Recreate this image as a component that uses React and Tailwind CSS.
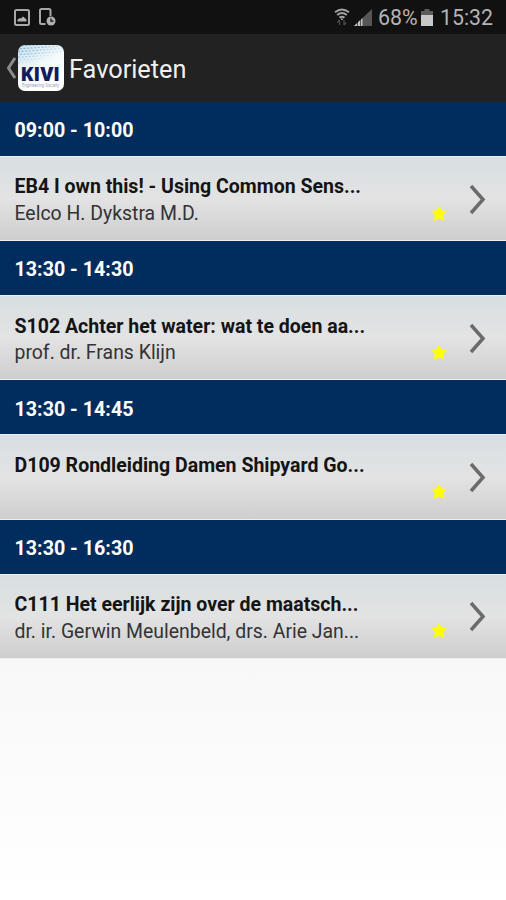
const rows = [
  { time: "09:00 - 10:00", title: "EB4 I own this! - Using Common Sens...", sub: "Eelco H. Dykstra M.D." },
  { time: "13:30 - 14:30", title: "S102 Achter het water: wat te doen aa...", sub: "prof. dr. Frans Klijn" },
  { time: "13:30 - 14:45", title: "D109 Rondleiding Damen Shipyard Go...", sub: "" },
  { time: "13:30 - 16:30", title: "C111 Het eerlijk zijn over de maatsch...", sub: "dr. ir. Gerwin Meulenbeld, drs. Arie Jan..." },
];

const dots = [];
for (let r = 0; r < 7; r++) {
  for (let c = 0; c < 13; c++) {
    dots.push({ x: 2 + c * 3.6 + (r % 2) * 1.8, y: 2 + r * 2.8 - c * 0.25, o: Math.max(0, 0.85 - c * 0.04 - r * 0.1) });
  }
}

function StatusBar() {
  return (
    <div className="flex h-[34px] shrink-0 items-center bg-[#111111] pl-[14px] pr-[13px] text-[#b4b4b4]">
      <svg width="16" height="17" viewBox="0 0 16 17" fill="none" stroke="#a8a8a8" strokeWidth="2">
        <rect x="1" y="1" width="14" height="15" rx="1.5" />
        <path d="M3.500 12.500V10.500l2.500-1.500 1 .500 2-2 3.500 3v2z" fill="#b0b0b0" stroke="none" />
      </svg>
      <svg className="ml-[9px]" width="17" height="18" viewBox="0 0 17 18" fill="none" stroke="#a8a8a8" strokeWidth="2">
        <path d="M11.500 8V2.500Q11.500 1 10 1H2.500Q1 1 1 2.500V14.500Q1 16 2.500 16H6.500" />
        <circle cx="12" cy="13" r="4.500" fill="#b0b0b0" stroke="none" />
        <path d="M12 10.500V13.200h2.500" stroke="#111111" strokeWidth="1.300" />
      </svg>
      <div className="grow" />
      <svg width="16" height="18" viewBox="0 0 16 18" fill="none" stroke="#a2a2a2" strokeWidth="1.900">
        <path d="M1 4.300Q8-1.500 15 4.300M3.200 7Q8 2.800 12.800 7M5.500 9.800Q8 7.500 10.500 9.800" />
        <path d="M8 10.500v1.500" />
        <path d="M5.500 12v5M3.500 14.500l2-2.500M10 12v5M12 14.500L10 17" stroke="#4c4c4c" strokeWidth="1.300" />
      </svg>
      <svg className="ml-[4px]" width="18" height="17" viewBox="0 0 18 17">
        <path d="M0 17L18 0V17z" fill="#555555" />
        <path d="M0 17l3-2.800V17zM4 17V13.200l2-1.900V17zM7 17V10.400l1.500-1.400V17z" fill="#c0c0c0" />
      </svg>
      <span className="ml-[6px] w-[40px] whitespace-nowrap pt-px text-[21.400px] leading-[34px]">68%</span>
      <svg className="ml-[3px]" width="12" height="17" viewBox="0 0 12 17">
        <path d="M3.500 0h5v2H12v4H0V2h3.500z" fill="#5c5c5c" />
        <path d="M0 6h12v11H0z" fill="#c8c8c8" />
      </svg>
      <span className="ml-[7px] w-[53px] whitespace-nowrap pt-px text-[21.300px] leading-[34px]">15:32</span>
    </div>
  );
}

function Header() {
  return (
    <div className="flex h-[68px] shrink-0 items-center bg-[#222222] pl-[6px]">
      <svg width="11" height="22" viewBox="0 0 11 22" fill="none" stroke="#8c8c8c" strokeWidth="3">
        <path d="M9 1L2.500 11L9 21" />
      </svg>
      <svg width="48" height="48" viewBox="0 0 48 48">
        <defs>
          <linearGradient id="logo" x1="0" y1="0" x2="0.6" y2="1">
            <stop offset="0" stopColor="#c7e2ef" />
            <stop offset="0.55" stopColor="#f5fafc" />
            <stop offset="1" stopColor="#ffffff" />
          </linearGradient>
          <clipPath id="logoClip"><rect x="1" y="1" width="46" height="46" rx="7" /></clipPath>
        </defs>
        <rect x="1" y="1" width="46" height="46" rx="7" fill="url(#logo)" />
        <g clipPath="url(#logoClip)" fill="#6fa2c4">
          {dots.map((d, i) => <ellipse key={i} cx={d.x} cy={d.y} rx="1.300" ry="0.800" opacity={d.o} />)}
        </g>
        <text x="3.500" y="36.500" textLength="39.500" lengthAdjust="spacingAndGlyphs" fontSize="19.500" fontWeight="800" fontFamily="'Open Sans', sans-serif" fill="#121d5c">KIVI</text>
        <text x="5" y="43" textLength="37" lengthAdjust="spacingAndGlyphs" fontSize="4.500" fill="#a3a9b5">Engineering Society</text>
      </svg>
      <span className="ml-[4px] pt-[4px] text-[25.300px] leading-[34px] text-[#f0f0f0]">Favorieten</span>
    </div>
  );
}

function Row({ time, title, sub }) {
  return (
    <section className="flex h-[139.200px] shrink-0 flex-col">
      <h2 className="flex h-[54px] shrink-0 items-center bg-[#002d5e] pl-[14.500px] pt-[4px] text-[19.700px] font-bold text-white">{time}</h2>
      <div className="flex grow border-y border-[#eeeef4] bg-linear-to-b from-[#d7dfe2] via-[#e3e3e3] to-[#cecece] pl-[14.500px]">
        <div className="w-[410.500px] whitespace-nowrap pt-[17.400px] leading-[26.800px]">
          <div className="text-[19.530px] font-bold text-[#141414]">{title}</div>
          <div className="text-[19.430px] text-[#333333]">{sub}</div>
        </div>
        <svg className="mt-[47.500px] ml-[6px]" width="16" height="17" viewBox="0 0 16 17">
          <path d="M8 .500l2.600 5.100 5.200.500-3.800 4 1.500 6L8 13.600l-5.500 2.500L4 10.100.200 6.100l5.200-.500z" fill="#ffff00" />
        </svg>
        <svg className="mt-[26.500px] ml-[22px]" width="18" height="31" viewBox="0 0 18 31" fill="none" stroke="#6b6b6b" strokeWidth="3.500">
          <path d="M2 2L14 15.500L2 29" />
        </svg>
      </div>
    </section>
  );
}

export default function App() {
  return (
    <main className="flex h-[900px] w-[506px] flex-col overflow-hidden bg-white font-[Roboto,sans-serif]">
      <StatusBar />
      <Header />
      {rows.map((r) => <Row key={r.title} {...r} />)}
      <div className="grow bg-linear-to-b from-[#f8f8f8] to-white" />
    </main>
  );
}
